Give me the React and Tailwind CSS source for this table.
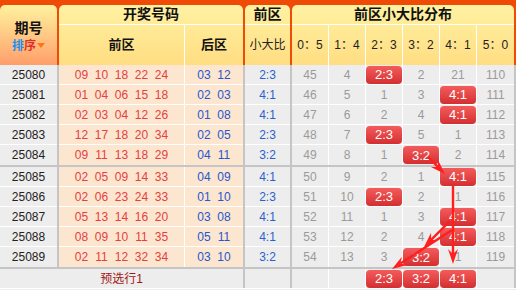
import React from 'react';

const rows = [
  ['25080', '09 10 18 22 24', '03 12', '2:3', [45, 4, 'B', 2, 21, 110]],
  ['25081', '01 04 06 15 18', '02 03', '4:1', [46, 5, 1, 3, 'B', 111]],
  ['25082', '02 03 04 12 26', '01 08', '4:1', [47, 6, 2, 4, 'B', 112]],
  ['25083', '12 17 18 20 34', '02 05', '2:3', [48, 7, 'B', 5, 1, 113]],
  ['25084', '09 11 13 18 29', '04 11', '3:2', [49, 8, 1, 'B', 2, 114]],
  ['25085', '02 05 09 14 33', '04 09', '4:1', [50, 9, 2, 1, 'B', 115]],
  ['25086', '02 06 23 24 33', '01 10', '2:3', [51, 10, 'B', 2, 1, 116]],
  ['25087', '05 13 14 16 20', '03 08', '4:1', [52, 11, 1, 3, 'B', 117]],
  ['25088', '08 09 10 11 35', '05 11', '4:1', [53, 12, 2, 4, 'B', 118]],
  ['25089', '02 11 12 32 34', '03 10', '3:2', [54, 13, 3, 'B', 1, 119]],
];

const dist = ['0：5', '1：4', '2：3', '3：2', '4：1', '5：0'];
const preselect = [null, null, '2:3', '3:2', '4:1', null];

function Badge({ text }) {
  return (
    <div className="h-[18px] w-full rounded-[4px] bg-linear-to-b from-[#f45b5b] to-[#d32e31] text-white text-[13px] flex items-center justify-center leading-none">
      {text}
    </div>
  );
}

function Sep() {
  return <div className="w-[2px] shrink-0 bg-[#c6c5c5]" />;
}

function Row({ r, last }) {
  const [issue, front, back, ratio, cells] = r;
  const line = last ? '' : 'border-b border-white';
  return (
    <div className="flex h-[20px]">
      <div className={`w-[57px] flex items-center justify-center text-[#222] bg-[#eeeded] ${line}`}>{issue}</div>
      <Sep />
      <div className={`w-[126px] flex items-center justify-center border-r border-white bg-[#fde6cf] text-[#e5403f] ${line}`}>
        {front.split(' ').map((n, i) => (
          <span key={i} className="w-[20px] text-center">{n}</span>
        ))}
      </div>
      <div className={`w-[58px] flex items-center justify-center bg-[#fde6cf] text-[#2458cf] ${line}`}>
        {back.split(' ').map((n, i) => (
          <span key={i} className="w-[20px] text-center">{n}</span>
        ))}
      </div>
      <Sep />
      <div className={`w-[45px] flex items-center justify-center bg-[#eeeded] text-[#2a5fd0] ${line}`}>{ratio}</div>
      <Sep />
      {cells.map((c, i) => (
        <div
          key={i}
          className={`w-[37px] flex items-center justify-center bg-[#eeeded] text-[#9a9a9a] ${i < 5 ? 'border-r border-white' : ''} ${line}`}
        >
          {c === 'B' ? <Badge text={dist[i].replace('：', ':')} /> : c}
        </div>
      ))}
      <Sep />
    </div>
  );
}

function Arrow({ x1, y1, x2, y2 }) {
  const a = Math.atan2(y2 - y1, x2 - x1);
  const L = 15;
  const W = 5;
  const bx = x2 - L * Math.cos(a);
  const by = y2 - L * Math.sin(a);
  const lx = bx + W * Math.sin(a);
  const ly = by - W * Math.cos(a);
  const rx = bx - W * Math.sin(a);
  const ry = by + W * Math.cos(a);
  const mx = x2 - (L - 5) * Math.cos(a);
  const my = y2 - (L - 5) * Math.sin(a);
  return (
    <g>
      <line x1={x1} y1={y1} x2={mx} y2={my} stroke="#ff1f1f" strokeWidth="2.4" />
      <polygon points={`${x2},${y2} ${lx},${ly} ${mx},${my} ${rx},${ry}`} fill="#ff1f1f" />
    </g>
  );
}

export default function App() {
  return (
    <div className="relative w-[516px] h-[290px] overflow-hidden bg-[#eeeded] text-[12px] [font-family:'Liberation_Sans','Noto_Sans_CJK_SC',sans-serif]">
      {/* header */}
      <div className="flex gap-[2px] bg-[#ef4a06] pt-[5px] pr-[2px] h-[65px]">
        <div className="w-[57px] rounded-t-[5px] bg-linear-to-b from-[#fff29e] to-[#ff9e6b] flex flex-col items-center justify-center">
          <div className="text-[14px] font-bold text-[#111] leading-[18px] mt-[2px]">期号</div>
          <div className="flex items-center text-[12px] font-bold leading-[16px] mt-[1px]">
            <span className="text-[#1e90f0]">排</span>
            <span className="text-[#e0302a]">序</span>
            <span className="ml-[1px] w-0 h-0 border-l-[4px] border-r-[4px] border-t-[5px] border-l-transparent border-r-transparent border-t-[#ff7418]" />
          </div>
        </div>
        <div className="w-[184px] rounded-t-[5px] bg-linear-to-b from-[#fff2a2] to-[#ffdd82] flex flex-col">
          <div className="h-[20px] border-b border-white flex items-center justify-center text-[14px] font-bold text-[#111]">开奖号码</div>
          <div className="flex-1 flex">
            <div className="w-[126px] border-r border-white flex items-center justify-center text-[13px] font-bold text-[#111]">前区</div>
            <div className="flex-1 flex items-center justify-center text-[13px] font-bold text-[#111]">后区</div>
          </div>
        </div>
        <div className="w-[45px] rounded-t-[5px] bg-linear-to-b from-[#fff2a2] to-[#ffdd82] flex flex-col">
          <div className="h-[20px] border-b border-white flex items-center justify-center text-[14px] font-bold text-[#111]">前区</div>
          <div className="flex-1 flex items-center justify-center text-[12px] text-[#222]">小大比</div>
        </div>
        <div className="w-[222px] rounded-t-[5px] bg-linear-to-b from-[#fff2a2] to-[#ffdd82] flex flex-col">
          <div className="h-[20px] border-b border-white flex items-center justify-center text-[14px] font-bold text-[#111]">前区小大比分布</div>
          <div className="flex-1 flex">
            {dist.map((d, i) => (
              <div
                key={d}
                className={`w-[37px] flex items-center justify-center text-[12px] text-[#222] ${i < 5 ? 'border-r border-white' : ''}`}
              >
                {d}
              </div>
            ))}
          </div>
        </div>
      </div>

      {/* body */}
      {rows.slice(0, 5).map((r, i) => (
        <Row key={r[0]} r={r} last={i === 4} />
      ))}
      <div className="h-[2px] bg-[#c6c5c5]" />
      {rows.slice(5).map((r, i) => (
        <Row key={r[0]} r={r} last={i === 4} />
      ))}
      <div className="h-[2px] bg-[#c6c5c5]" />
      <div className="flex h-[20px] border-b border-white">
        <div className="w-[243px] flex items-center justify-center text-[#a01818]">预选行1</div>
        <Sep />
        <div className="w-[45px]" />
        <Sep />
        {preselect.map((p, i) => (
          <div key={i} className={`w-[37px] flex items-center justify-center ${i < 5 ? 'border-r border-white' : ''}`}>
            {p && <Badge text={p} />}
          </div>
        ))}
        <Sep />
      </div>

      {/* arrows */}
      <svg className="absolute left-0 top-0 pointer-events-none" width="516" height="290">
        <Arrow x1={428} y1={157} x2={445} y2={174} />
        <Arrow x1={453} y1={186} x2={453} y2={264} />
        <Arrow x1={452} y1={230} x2={392} y2={269} />
        <Arrow x1={450} y1={221} x2={424} y2={247} />
      </svg>
    </div>
  );
}
